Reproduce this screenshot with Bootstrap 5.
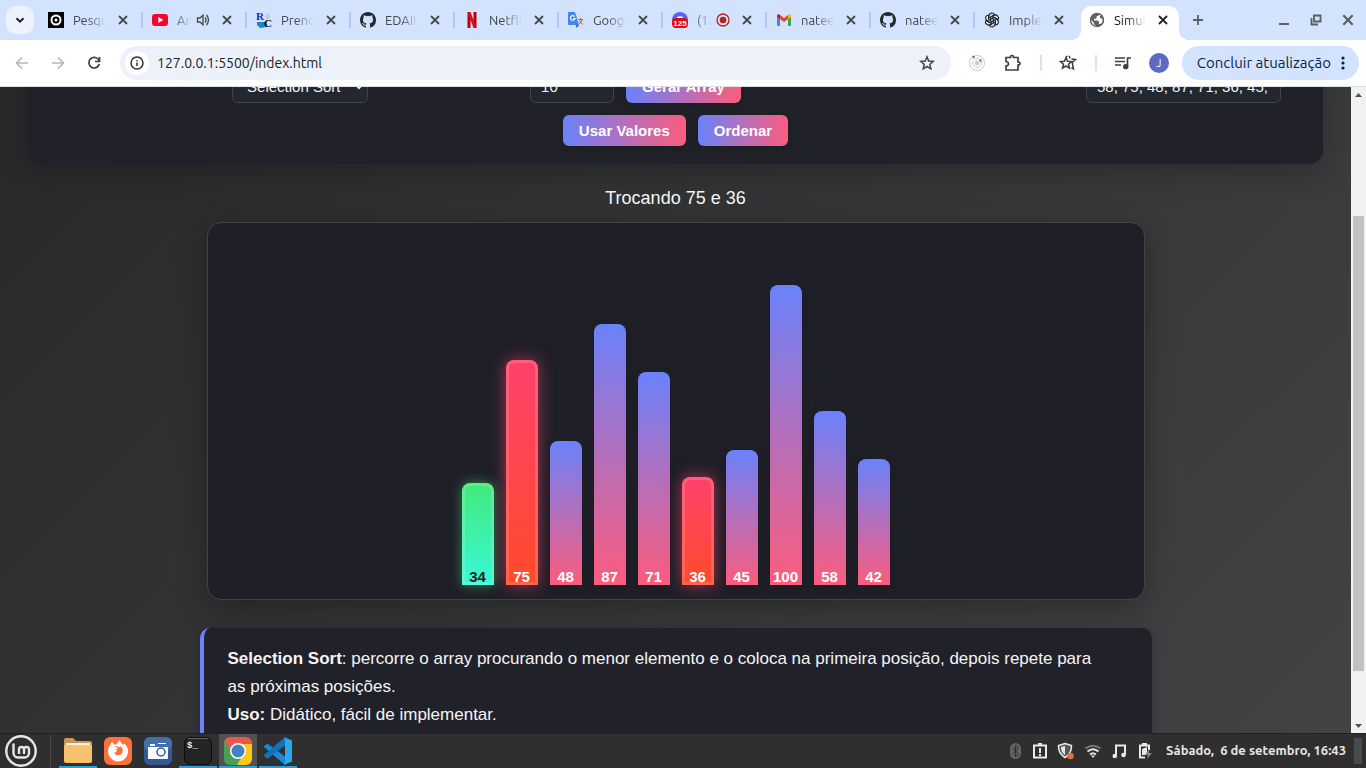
<!DOCTYPE html>
<html lang="pt-BR">
<head>
<meta charset="utf-8">
<meta name="viewport" content="width=device-width, initial-scale=1">
<title>Simulador de Ordenação</title>
<link href="https://cdn.jsdelivr.net/npm/bootstrap@5.3.0/dist/css/bootstrap.min.css" rel="stylesheet">
<style>
body{font-family:Ubuntu,"Noto Sans","Open Sans",sans-serif;font-size:13px;color:#43474b;background:#2f2f2f}
button{font-family:inherit}
svg{display:block;flex:none}
.plain{border:0;background:none;padding:0;color:inherit;display:flex;align-items:center;justify-content:center;flex:none}
/* tab strip */
.strip{height:40px;background:#d3e2fd;padding:0 2px 0 6px}
.tab-search{width:28px;height:28px;border-radius:10px;background:#ecf2fe;margin-right:4px;color:#202124}
.tabs{flex:0 1 1144px;height:40px;min-width:0}
.tab-item{flex:0 1 104px;min-width:0;height:40px;padding:0 13px 0 10px;position:relative}
.tab-item+.tab-item:not(.current)::before{content:"";position:absolute;left:-1px;top:12px;width:2px;height:16px;background:#a8c7fa}
.tab-item a{color:inherit;text-decoration:none;overflow:hidden;white-space:nowrap;flex:1 1 0;min-width:0;margin-left:9px;line-height:20px;-webkit-mask-image:linear-gradient(90deg,#000 calc(100% - 18px),transparent);mask-image:linear-gradient(90deg,#000 calc(100% - 18px),transparent)}
.tab-item .plain{width:12px;height:12px;margin-left:11px}
.tab-item.current{flex-basis:101px;color:#202124;padding:0 10px 0 11px}
.tab-item.current::before{content:"";position:absolute;inset:6px 0 0 3px;background:#fff;border-radius:10px 10px 0 0}
.tab-item.current>*{position:relative}
.foot{position:absolute!important;bottom:0;width:10px;height:10px}
.foot-l{left:-7px;background:radial-gradient(circle at 0 0,transparent 10px,#fff 10px)}
.foot-r{right:-10px;background:radial-gradient(circle at 100% 0,transparent 10px,#fff 10px)}
.win{width:32px;height:40px;color:#5a5d61}
/* toolbar */
.toolbar{height:47px;background:#fff;border-bottom:1px solid #dcdfe3;padding:0 7px 0 4px}
.tool{width:36px;height:34px}
.omni{height:34px;border-radius:17px;background:#ecf1fa;margin:0 8px;padding:0 6px 0 5px}
.omni-info{width:24px;height:24px;border-radius:50%;background:#fff}
.omni input{border:0;background:none;outline:0;padding:0;margin-left:8px;font-size:14px;color:#202124;flex:1;min-width:0}
.rule{width:2px;height:16px;background:#d3e3fd;flex:none;margin:0 8px 0 9px}
.avatar{width:20px;height:20px;border-radius:50%;background:#5c6bc0;color:#fff;font-size:11px}
.update{height:34px;border-radius:17px;background:#d3e3fd;color:#0b1f4b;font-size:15px;padding:0 14px 0 15px;margin-left:5px;gap:10px;white-space:nowrap}
/* page */
.page{font-family:"Liberation Sans",Arial,sans-serif;font-size:17px;color:#f5f5f5;background:linear-gradient(135deg,#27292a,#414345);min-height:0;overflow:hidden}
.controls{margin:-35px 28px 0;padding:18px;border-radius:14px;background:#212129;box-shadow:0 8px 32px rgba(0,0,0,.25)}
.fields{display:grid;grid-template-columns:186fr auto 162fr auto 345fr auto 24fr;margin-bottom:12px}
.fields>:nth-child(1){grid-column:2}.fields>:nth-child(2){grid-column:4}.fields>:nth-child(3){grid-column:6}
.group{gap:12px}
.field{height:33px;font-size:15px;color:#f5f5f5;background:#23272f;border:1px solid #444;border-radius:6px;padding:0 10px;color-scheme:dark}
select.field{width:136px}
.size{width:84px}.values{width:195px}
.act{min-height:31px;font-size:15px;line-height:19px;font-weight:700;color:#fff;border:0;border-radius:6px;padding:0 16px;background:linear-gradient(90deg,#6a82fb,#fc5c7d);box-shadow:0 2px 8px rgba(0,0,0,.2)}
.status{margin:22px 0 11px;font-size:18px;line-height:25px;text-align:center}
.chart{width:calc(100% - 413px);height:378px;margin:0 auto;padding:0 0 14px;border:1px solid #444;border-radius:14px;background:#1f1f28;box-shadow:0 8px 32px rgba(0,0,0,.3);gap:12px}
.bar{width:32px;border-radius:8px 8px 0 0;background:linear-gradient(180deg,#6a82fb,#fc5c7d);box-shadow:0 2px 8px rgba(0,0,0,.15);font-size:15px;line-height:17px;font-weight:700;color:#fff;display:flex;align-items:flex-end;justify-content:center}
.swap{background:linear-gradient(180deg,#ff416c,#ff4b2b);box-shadow:0 0 16px rgba(255,65,108,.6),inset 0 0 0 3px rgba(255,255,255,.15)}
.done{background:linear-gradient(180deg,#43e97b,#38f9d7);color:#222;box-shadow:0 0 12px rgba(67,233,123,.5),inset 0 0 0 3px rgba(255,255,255,.15)}
.about{width:calc(100% - 399px);margin:28px auto 0;padding:17px 40px 17px 24px;line-height:28px;border-left:4px solid #6a82fb;border-radius:10px;background:#212129;box-shadow:0 2px 12px rgba(0,0,0,.2)}
.scroll{width:15px;background:#f1f1f1;flex:none}
.scroll .plain{height:15px;width:15px}
.thumb{width:11px;background:#c1c1c1}
/* desktop panel */
.dock{height:35px;background:#2f2f2f;border-top:1px solid #202020;color:#e8e8e8;padding-right:4px}
.task{width:38px;height:34px;margin-right:2px}
.open{border-bottom:2px solid #2a9fd8;padding-top:2px}
.front{background:#515151}
.tray{gap:9px}
.clock{font-size:13px;font-weight:700;color:#e4e4e4;white-space:pre;margin:0 8px 0 12px}
</style>
</head>
<body class="vh-100 d-flex flex-column overflow-hidden">
<svg width="0" height="0" class="position-absolute" aria-hidden="true">
<symbol id="x" viewBox="0 0 12 12"><path d="M2 2l8 8M10 2l-8 8" stroke="currentColor" stroke-width="1.8"/></symbol>
<symbol id="gh" viewBox="0 0 16 16"><path fill="#24292f" d="M8 0C3.58 0 0 3.58 0 8c0 3.54 2.29 6.53 5.47 7.59.4.07.55-.17.55-.38 0-.19-.01-.82-.01-1.49-2.01.37-2.53-.49-2.69-.94-.09-.23-.48-.94-.82-1.13-.28-.15-.68-.52-.01-.53.63-.01 1.08.58 1.23.82.72 1.21 1.87.87 2.33.66.07-.52.28-.87.51-1.07-1.78-.2-3.64-.89-3.64-3.95 0-.87.31-1.59.82-2.15-.08-.2-.36-1.02.08-2.12 0 0 .67-.21 2.2.82a7.6 7.6 0 014 0c1.53-1.04 2.2-.82 2.2-.82.44 1.1.16 1.92.08 2.12.51.56.82 1.27.82 2.15 0 3.07-1.87 3.75-3.65 3.95.29.25.54.73.54 1.48 0 1.07-.01 1.93-.01 2.2 0 .21.15.46.55.38A8 8 0 0016 8c0-4.42-3.58-8-8-8z"/></symbol>
</svg>

<header>
<div class="strip d-flex align-items-center">
  <button class="plain tab-search" aria-label="Pesquisar guias"><svg width="10" height="10" viewBox="0 0 10 10"><path d="M1.5 3.2L5 6.7l3.500-3.500" fill="none" stroke="currentColor" stroke-width="2"/></svg></button>
  <nav class="tabs d-flex" aria-label="Guias">
    <div class="tab-item d-flex align-items-center"><svg width="16" height="16"><path d="M0 0h16v16H0z"/><circle cx="8" cy="8" r="4.500" fill="none" stroke="#fff" stroke-width="2"/><circle cx="8" cy="8" r="1.500" fill="#fff"/></svg><a href="#">Pesqu</a><button class="plain" aria-label="Fechar"><svg width="12" height="12"><use href="#x"/></svg></button></div>
    <div class="tab-item d-flex align-items-center"><svg width="16" height="16"><rect y="2" width="16" height="12" rx="3" fill="#f03"/><path d="M6.300 5v6l5-3z" fill="#fff"/></svg><a href="#">Ar</a><svg class="ms-1" width="14" height="14" viewBox="0 0 14 14" fill="none" stroke="#43474b" stroke-width="1.300"><path d="M1.500 5H4l3-2.800v9.600L4 9H1.500zM9 4.500q2 2.500 0 5M10.500 2q4 5 0 10"/></svg><button class="plain" aria-label="Fechar"><svg width="12" height="12"><use href="#x"/></svg></button></div>
    <div class="tab-item d-flex align-items-center"><svg width="16" height="16"><path d="M1 10h9l1 5-7 1-3-3z" fill="#1a87c9"/><path d="M9 3l4-2 1 5-4 2z" fill="#c7cbd0"/><text x="0" y="8" font-family="Liberation Serif" font-weight="700" font-size="11" fill="#1030c0">R</text><text x="8" y="15" font-family="Liberation Serif" font-weight="700" font-size="11">C</text></svg><a href="#">Prend</a><button class="plain" aria-label="Fechar"><svg width="12" height="12"><use href="#x"/></svg></button></div>
    <div class="tab-item d-flex align-items-center"><svg width="16" height="16"><use href="#gh"/></svg><a href="#">EDAII/</a><button class="plain" aria-label="Fechar"><svg width="12" height="12"><use href="#x"/></svg></button></div>
    <div class="tab-item d-flex align-items-center"><svg width="16" height="16"><path d="M3.500 0h3v16h-3zM9.500 0h3v16h-3z" fill="#b1060f"/><path d="M3.500 0h3l6 16h-3z" fill="#e50914"/></svg><a href="#">Netfli</a><button class="plain" aria-label="Fechar"><svg width="12" height="12"><use href="#x"/></svg></button></div>
    <div class="tab-item d-flex align-items-center"><svg width="16" height="16"><path d="M6 3h9a1 1 0 011 1v11a1 1 0 01-1 1H9z" fill="#dadce0"/><path d="M1 0h6l4 13H1a1 1 0 01-1-1V1a1 1 0 011-1z" fill="#4285f4"/><path d="M8 13h3l-2.500 3z" fill="#1a56c4"/><path d="M6.700 4.700A2.300 2.300 0 107 6.500H5" fill="none" stroke="#fff" stroke-width="1.200"/><path d="M10.500 7.500h4.500M12.700 6v1.500M14 8q-.5 2.500-3 4M11.500 8.500q1 2.500 3 3.500" fill="none" stroke="#6b7c8d"/></svg><a href="#">Googl</a><button class="plain" aria-label="Fechar"><svg width="12" height="12"><use href="#x"/></svg></button></div>
    <div class="tab-item d-flex align-items-center"><svg width="16" height="16"><circle cx="8" cy="8" r="8" fill="#5865f2"/><path d="M5 5q3-1.500 6 0v2H5z" fill="#fff"/><rect y="6" width="16" height="10" rx="4" fill="#e00b12"/><text x="8" y="14" text-anchor="middle" font-family="Liberation Sans" font-size="8" font-weight="700" fill="#fff">125</text></svg><a href="#">(12</a><svg class="ms-1" width="14" height="14"><circle cx="7" cy="7" r="6" fill="none" stroke="#b3261e" stroke-width="1.300"/><circle cx="7" cy="7" r="3.300" fill="#b3261e"/></svg><button class="plain" aria-label="Fechar"><svg width="12" height="12"><use href="#x"/></svg></button></div>
    <div class="tab-item d-flex align-items-center"><svg width="16" height="16"><path d="M1 3h3v11H2a1 1 0 01-1-1z" fill="#4285f4"/><path d="M12 3h3v10a1 1 0 01-1 1h-2z" fill="#34a853"/><path d="M1 3.500Q2 1.500 4 3l4 3 4-3v4l-4 3-4-3-3-2z" fill="#ea4335"/><path d="M12 3q2-1.500 3 .5V5l-3 2z" fill="#fbbc04"/><path d="M1 3.500V5l3 2V3Q2 2 1 3.500z" fill="#c5221f"/></svg><a href="#">natee</a><button class="plain" aria-label="Fechar"><svg width="12" height="12"><use href="#x"/></svg></button></div>
    <div class="tab-item d-flex align-items-center"><svg width="16" height="16"><use href="#gh"/></svg><a href="#">natee</a><button class="plain" aria-label="Fechar"><svg width="12" height="12"><use href="#x"/></svg></button></div>
    <div class="tab-item d-flex align-items-center"><svg width="16" height="16" viewBox="-8 -8 16 16" fill="none" stroke="#202124" stroke-width="1.100"><g id="k"><path d="M-3-1.500v-2.500A3 3 0 012.600-5.500L-1.500-3v4"/></g><use href="#k" transform="rotate(60)"/><use href="#k" transform="rotate(120)"/><use href="#k" transform="rotate(180)"/><use href="#k" transform="rotate(240)"/><use href="#k" transform="rotate(300)"/></svg><a href="#">Imple</a><button class="plain" aria-label="Fechar"><svg width="12" height="12"><use href="#x"/></svg></button></div>
    <div class="tab-item current d-flex align-items-center"><i class="foot foot-l"></i><i class="foot foot-r"></i><svg width="16" height="16"><circle cx="8" cy="8" r="7" fill="#5f6368"/><path d="M9 1.500l1 2-2.500 1v2L5 7v1.500h4l1 1.500v2h2l2-3-1-2.500-2-.5V4l1-1zM1.800 7.500L5 11v1.500l2 1-.5 1.300Q2 13.500 1.800 7.500z" fill="#fff"/><circle cx="8" cy="8" r="6.500" fill="none" stroke="#5f6368" stroke-width="1.300"/></svg><a href="#">Simul</a><button class="plain" aria-label="Fechar"><svg width="12" height="12"><use href="#x"/></svg></button></div>
  </nav>
  <button class="plain win" aria-label="Nova guia"><svg width="12" height="12"><path d="M6 1v10M1 6h10" stroke="currentColor" stroke-width="1.800"/></svg></button>
  <div class="ms-auto d-flex">
    <button class="plain win" aria-label="Minimizar"><svg width="12" height="12"><path d="M1 10h10" stroke="currentColor" stroke-width="2"/></svg></button>
    <button class="plain win" aria-label="Restaurar"><svg width="12" height="12" fill="none" stroke="currentColor" stroke-width="1.800"><path d="M4 1.500h6.500v6H4zM1.500 4v6.500H8"/></svg></button>
    <button class="plain win" aria-label="Fechar janela"><svg width="14" height="14" viewBox="0 0 12 12"><use href="#x"/></svg></button>
  </div>
</div>
<div class="toolbar d-flex align-items-center">
  <button class="plain tool" aria-label="Voltar"><svg width="14" height="14" fill="none" stroke="#b4b7ba" stroke-width="1.600"><path d="M13 7H2M7 1.500L1.500 7 7 12.500"/></svg></button>
  <button class="plain tool" aria-label="Avançar"><svg width="14" height="14" fill="none" stroke="#b4b7ba" stroke-width="1.600"><path d="M1 7h11M7 1.500L12.500 7 7 12.500"/></svg></button>
  <button class="plain tool" aria-label="Recarregar"><svg width="14" height="14" fill="none" stroke="#3c4043" stroke-width="1.700"><path d="M12 4.500A5.300 5.300 0 1012.300 8M12.500 1v4.500H8"/></svg></button>
  <form class="omni d-flex align-items-center flex-grow-1">
    <span class="omni-info d-flex align-items-center justify-content-center"><svg width="14" height="14" fill="none" stroke="#303134" stroke-width="1.500"><circle cx="7" cy="7" r="6"/><path d="M7 6.500V10M7 4v1.300"/></svg></span>
    <input type="text" aria-label="Endereço" value="127.0.0.1:5500/index.html">
    <button type="button" class="plain tool" aria-label="Favoritar"><svg width="16" height="16" fill="none" stroke="#43474b" stroke-width="1.500"><path d="M8 1.800l1.700 4.200 4.500.4-3.400 3 1 4.400L8 11.500l-3.800 2.300 1-4.400-3.400-3 4.500-.4z"/></svg></button>
  </form>
  <button class="plain tool" aria-label="Extensão"><svg width="16" height="16" fill="none" stroke="#c9cbce"><circle cx="8" cy="8" r="7.500"/><circle cx="8" cy="8" r="4.500"/><circle cx="8" cy="8" r="2" fill="#c9cbce"/><circle cx="4.500" cy="2" r="1.300" fill="#777" stroke="none"/><circle cx="11.500" cy="5.500" r="1.300" fill="#777" stroke="none"/></svg></button>
  <button class="plain tool" aria-label="Extensões"><svg width="18" height="18" fill="none" stroke="#3c4043" stroke-width="1.700"><path d="M2 3.500h4.500q-.3-2 1.500-2t1.500 2H14V8q2 0 2 1.500T14 11v5H2v-4q2.500-.3 2.500-2.200T2 7.500z"/></svg></button>
  <span class="rule"></span>
  <button class="plain tool" aria-label="Favoritos"><svg width="18" height="16" fill="none" stroke="#3c4043" stroke-width="1.500"><path d="M7 2.500l1.500 3.700 4 .3-3 2.700 1 4L7 11l-3.500 2.200 1-4-3-2.700 4-.3zM10 .8l1.200 2.700M12.500 4l4 .5-3.300 3 1.200 6.500-2-1.300M7.500 1l.6 1"/></svg></button>
  <span class="rule"></span>
  <button class="plain tool" aria-label="Mídia"><svg width="16" height="14" fill="none" stroke="#3c4043" stroke-width="1.700"><path d="M0 2h10M0 5.500h10M0 9h6M12.500 11V2H16"/><circle cx="10.700" cy="10.700" r="1.800" fill="#3c4043"/></svg></button>
  <button class="plain tool" aria-label="Perfil"><span class="avatar d-flex align-items-center justify-content-center">J</span></button>
  <button class="plain update">Concluir atualização <svg width="4" height="16" fill="#0b1f4b"><circle cx="2" cy="3" r="1.600"/><circle cx="2" cy="8" r="1.600"/><circle cx="2" cy="13" r="1.600"/></svg></button>
</div>
</header>

<div class="d-flex flex-grow-1 overflow-hidden">
<main class="page flex-grow-1">
  <section class="controls">
    <div class="fields">
      <select class="field" aria-label="Algoritmo"><option>Selection Sort</option></select>
      <div class="group d-flex"><input class="field size" type="text" inputmode="numeric" aria-label="Tamanho" value="10"><button class="act">Gerar Array</button></div>
      <input class="field values" type="text" aria-label="Valores" value="58, 75, 48, 87, 71, 36, 45,">
    </div>
    <div class="group d-flex justify-content-center"><button class="act">Usar Valores</button><button class="act">Ordenar</button></div>
  </section>
  <p class="status">Trocando 75 e 36</p>
  <section class="chart d-flex justify-content-center align-items-end">
    <div class="bar done" style="height:102px">34</div>
    <div class="bar swap" style="height:225px">75</div>
    <div class="bar" style="height:144px">48</div>
    <div class="bar" style="height:261px">87</div>
    <div class="bar" style="height:213px">71</div>
    <div class="bar swap" style="height:108px">36</div>
    <div class="bar" style="height:135px">45</div>
    <div class="bar" style="height:300px">100</div>
    <div class="bar" style="height:174px">58</div>
    <div class="bar" style="height:126px">42</div>
  </section>
  <section class="about"><strong>Selection Sort</strong>: percorre o array procurando o menor elemento e o coloca na primeira posição, depois repete para as próximas posições.<br><strong>Uso:</strong> Didático, fácil de implementar.</section>
</main>
<div class="scroll d-flex flex-column align-items-center">
  <button class="plain" aria-label="Rolar para cima"><svg width="7" height="4"><path d="M0 4h7L3.500 0z" fill="#505050"/></svg></button>
  <div style="flex:114"></div><div class="thumb" style="flex:455"></div><div style="flex:47"></div>
  <button class="plain" aria-label="Rolar para baixo"><svg width="7" height="4"><path d="M0 0h7L3.500 4z" fill="#505050"/></svg></button>
</div>
</div>

<footer class="dock d-flex align-items-center">
  <button class="plain" style="width:42px" aria-label="Menu"><svg width="32" height="32" fill="none" stroke="#e6e6e6" stroke-width="2.400"><circle cx="16" cy="16" r="14.700"/><path d="M8.500 8.500V18a4.500 4.500 0 004.500 4.500h6.500A4.500 4.500 0 0024 18v-3.500a2.500 2.500 0 00-5 0V19M19 14.500a2.500 2.500 0 00-5 0V19"/></svg></button>
  <span class="ms-2 me-2" style="width:1px;height:32px;background:#4a4a4a"></span>
  <button class="plain task open" aria-label="Arquivos"><svg width="28" height="28"><path d="M0 3q0-2 2-2h7l3 3h14q2 0 2 2v18H0z" fill="#c89a4e"/><path d="M2 6h24v3H2z" fill="#f3f3f3"/><path d="M0 8h28v16q0 2-2 2H2q-2 0-2-2z" fill="#f8c26c"/></svg></button>
  <button class="plain task" aria-label="Firefox"><svg width="28" height="28"><rect width="28" height="28" rx="6" fill="#ff7139"/><path d="M14 24.500A10 10 0 014 14.500Q4 10 6.500 7.500L8 4.500l2 3h2q2-1 3-4.500 2 1.500 3.500 5l1.500-1.500Q24.500 10 24 15a10 10 0 01-10 9.500z" fill="#fff"/><path d="M10 10q2.500 0 4 1l-2 2 1 .7q-1 2.300-3 2 1.500 2.500 4 2.500 4 0 4.700-4 .3-3-2.200-5-1 1-2 .8-2-1.500-4.500 0z" fill="#ff7139"/></svg></button>
  <button class="plain task" aria-label="Captura"><svg width="28" height="28"><rect width="28" height="28" rx="6" fill="#335a96"/><rect width="28" height="14" rx="6" fill="#4070ae"/><path d="M4 10h20v12H4zM6 7h5v2H6zM14 6h8v1h-8z" fill="#fff"/><circle cx="17" cy="15" r="4" fill="#fff" stroke="#335a96" stroke-width="1.500"/></svg></button>
  <button class="plain task open" aria-label="Terminal"><svg width="28" height="28"><rect x=".5" y=".5" width="27" height="27" rx="6" fill="#242424" stroke="#0c0c0c"/><path d="M4 1.500h20" stroke="#666"/><text x="3" y="11" font-family="Liberation Mono" font-size="9" font-weight="700" fill="#eee">$_</text></svg></button>
  <button class="plain task open front" aria-label="Chrome"><svg width="28" height="28"><clipPath id="r"><rect width="28" height="28" rx="6"/></clipPath><g clip-path="url(#r)"><path d="M0 0h28v14H0z" fill="#e8584d"/><path d="M0 3l9 14 8 5-3 6H0z" fill="#4a9f52"/><path d="M14 7h14v21H13l7-12z" fill="#fbc918"/></g><circle cx="14" cy="14" r="8" fill="#fff"/><circle cx="14" cy="14" r="6.500" fill="#3e83c4"/></svg></button>
  <button class="plain task open" aria-label="VS Code"><svg width="28" height="28"><path d="M21 28v-8.500L4 7Q3 6.500 0 9v1z" fill="#1a8ad4"/><path d="M21 0v8.500L4 21.500Q3 22 0 19v-1z" fill="#1172b8"/><path d="M20 0l8 3.500v21L20 28q1-1 1-3V3q0-2-1-3z" fill="#2aa9f0"/></svg></button>
  <div class="tray d-flex align-items-center ms-auto">
    <svg width="16" height="18"><rect x="3" y="1" width="11" height="16" rx="5.500" fill="#636363"/><path d="M5.500 6l6 6-3 3V3l3 3-6 6" fill="none" stroke="#2f2f2f"/></svg>
    <svg width="16" height="18"><path d="M2 3.500h12v12H2z" fill="none" stroke="#e8e8e8" stroke-width="2"/><path d="M6 1h4v3H6zM7 6h2v5H7zM7 12h2v2H7z" fill="#e8e8e8"/></svg>
    <svg width="18" height="18"><path d="M8 1.500l6.500 2Q15 11 8 15.500 1 11 1.500 3.500z" fill="#555" stroke="#e8e8e8" stroke-width="1.500"/><path d="M8 4v9Q4 10 4 5z" fill="#e8e8e8"/><circle cx="13.500" cy="14" r="3.200" fill="#e0703a"/></svg>
    <svg width="18" height="18" fill="none" stroke="#e8e8e8" stroke-width="2"><path d="M1.500 6.500q7.500-5.500 15 0" stroke="#777"/><path d="M3.500 9.500q5.500-4.500 11 0M6 12.500q3-2.500 6 0"/><path d="M7 13.500h4L9 16z" fill="#e8e8e8" stroke="none"/></svg>
    <svg width="16" height="18"><path d="M5 14V3.500h9V13" fill="none" stroke="#e8e8e8" stroke-width="2"/><circle cx="3.800" cy="14" r="2.300" fill="#e8e8e8"/><circle cx="12.500" cy="13" r="2.300" fill="#e8e8e8"/></svg>
    <svg width="18" height="18"><path d="M9 15.500H4v-12h9V8" fill="none" stroke="#e8e8e8" stroke-width="2"/><path d="M6 1h5v2H6zM6 7l5-2v8H6z" fill="#e8e8e8"/><path d="M13 7l-4 6h3l-1 4 5-6h-3z" fill="#888"/></svg>
  </div>
  <time class="clock">Sábado,  6 de setembro, 16:43</time>
  <span style="width:8px;height:26px;background:#4a4a4a"></span>
</footer>
<script src="https://cdn.jsdelivr.net/npm/bootstrap@5.3.0/dist/js/bootstrap.bundle.min.js"></script>
</body>
</html>
